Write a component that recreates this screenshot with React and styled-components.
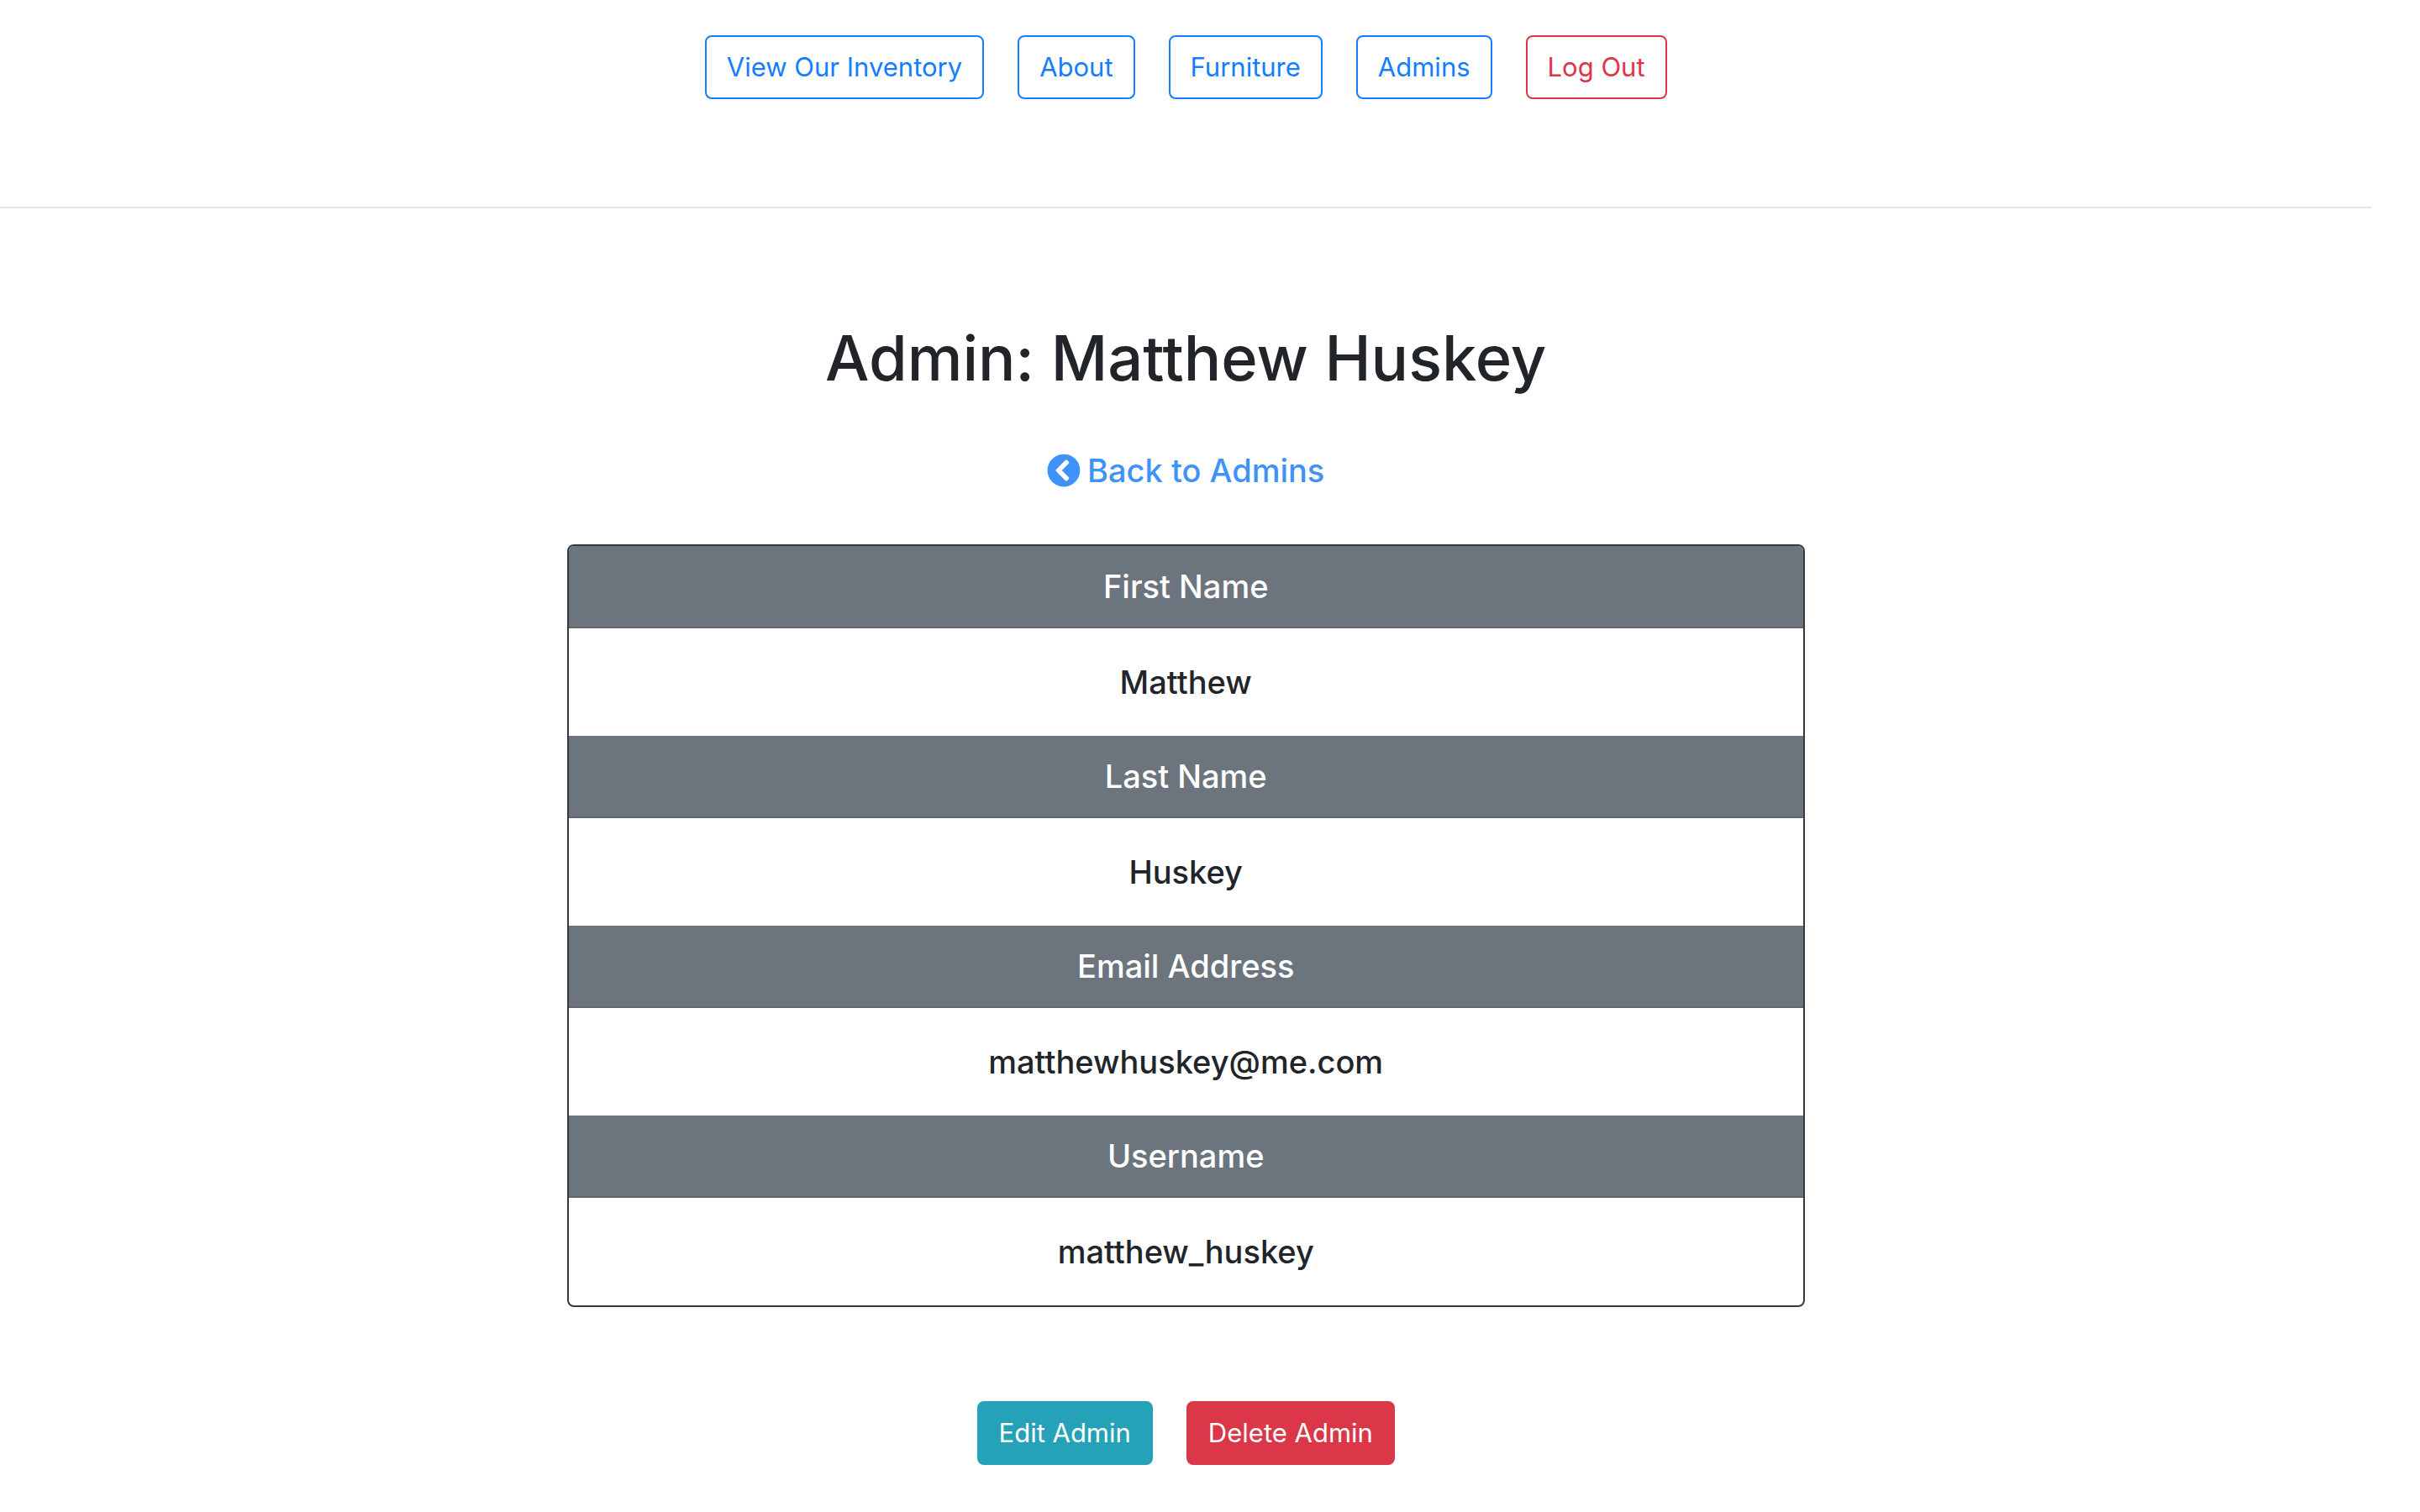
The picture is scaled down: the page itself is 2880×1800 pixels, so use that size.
import React from "react";
import styled, { createGlobalStyle } from "styled-components";
import { FaChevronCircleLeft } from "react-icons/fa";

const tones = {
  primary: "#147eff",
  danger: "#db3748",
  info: "#25a2b7",
};

const GlobalStyle = createGlobalStyle`
  *, *::before, *::after { box-sizing: border-box; }
  body {
    margin: 0;
    background: #ffffff;
    color: #212529;
    font-family: Inter, "Liberation Sans", sans-serif;
    font-size: 31px;
    line-height: 48px;
    text-align: center;
  }
`;

const Page = styled.div`
  padding-right: 2%;
`;

const Nav = styled.nav`
  display: flex;
  flex-wrap: wrap;
  justify-content: center;
  gap: 40px;
  padding: 42px 0 128px;
`;

const NavLink = styled.a`
  padding: 12px 24px;
  border: 2px solid ${({ $tone }) => tones[$tone]};
  border-radius: 8px;
  color: ${({ $tone }) => tones[$tone]};
  text-decoration: none;
`;

const Divider = styled.hr`
  margin: 0;
  border: 0;
  border-top: 2px solid #e5e5e5;
`;

const Main = styled.main`
  display: flex;
  flex-direction: column;
  align-items: center;
  padding: 130px 32px 56px;
`;

const Title = styled.h1`
  margin: 0 0 62px;
  font-size: 74px;
  font-weight: 500;
  line-height: 96px;
`;

const BackLink = styled.a`
  display: flex;
  align-items: center;
  gap: 8px;
  margin-bottom: 64px;
  color: #3f92f6;
  font-size: 38px;
  font-weight: 500;
  text-decoration: none;
`;

const Card = styled.dl`
  width: 100%;
  max-width: 1473px;
  margin: 0 0 112px;
  border: 2px solid #343a40;
  border-radius: 8px;
  overflow: hidden;
  font-size: 38px;
  font-weight: 500;
`;

const Label = styled.dt`
  padding: 24px 40px;
  border-bottom: 2px solid #5f666e;
  background: #6c747d;
  color: #ffffff;
`;

const Value = styled.dd`
  margin: 0;
  padding: 40px;
`;

const Actions = styled.div`
  display: flex;
  gap: 40px;
`;

const ActionButton = styled.button`
  padding: 12px 24px;
  border: 2px solid ${({ $tone }) => tones[$tone]};
  border-radius: 8px;
  background: ${({ $tone }) => tones[$tone]};
  color: #ffffff;
  font: inherit;
  cursor: pointer;
`;

const links = [
  { text: "View Our Inventory", tone: "primary" },
  { text: "About", tone: "primary" },
  { text: "Furniture", tone: "primary" },
  { text: "Admins", tone: "primary" },
  { text: "Log Out", tone: "danger" },
];

const fields = [
  ["First Name", "Matthew"],
  ["Last Name", "Huskey"],
  ["Email Address", "matthewhuskey@me.com"],
  ["Username", "matthew_huskey"],
];

export default function App() {
  return (
    <Page>
      <GlobalStyle />
      <Nav>
        {links.map(({ text, tone }) => (
          <NavLink key={text} href="#" $tone={tone}>{text}</NavLink>
        ))}
      </Nav>
      <Divider />
      <Main>
        <Title>Admin: Matthew Huskey</Title>
        <BackLink href="#">
          <FaChevronCircleLeft size={40} aria-hidden="true" />
          Back to Admins
        </BackLink>
        <Card>
          {fields.map(([label, value]) => (
            <React.Fragment key={label}>
              <Label>{label}</Label>
              <Value>{value}</Value>
            </React.Fragment>
          ))}
        </Card>
        <Actions>
          <ActionButton type="button" $tone="info">Edit Admin</ActionButton>
          <ActionButton type="button" $tone="danger">Delete Admin</ActionButton>
        </Actions>
      </Main>
    </Page>
  );
}
